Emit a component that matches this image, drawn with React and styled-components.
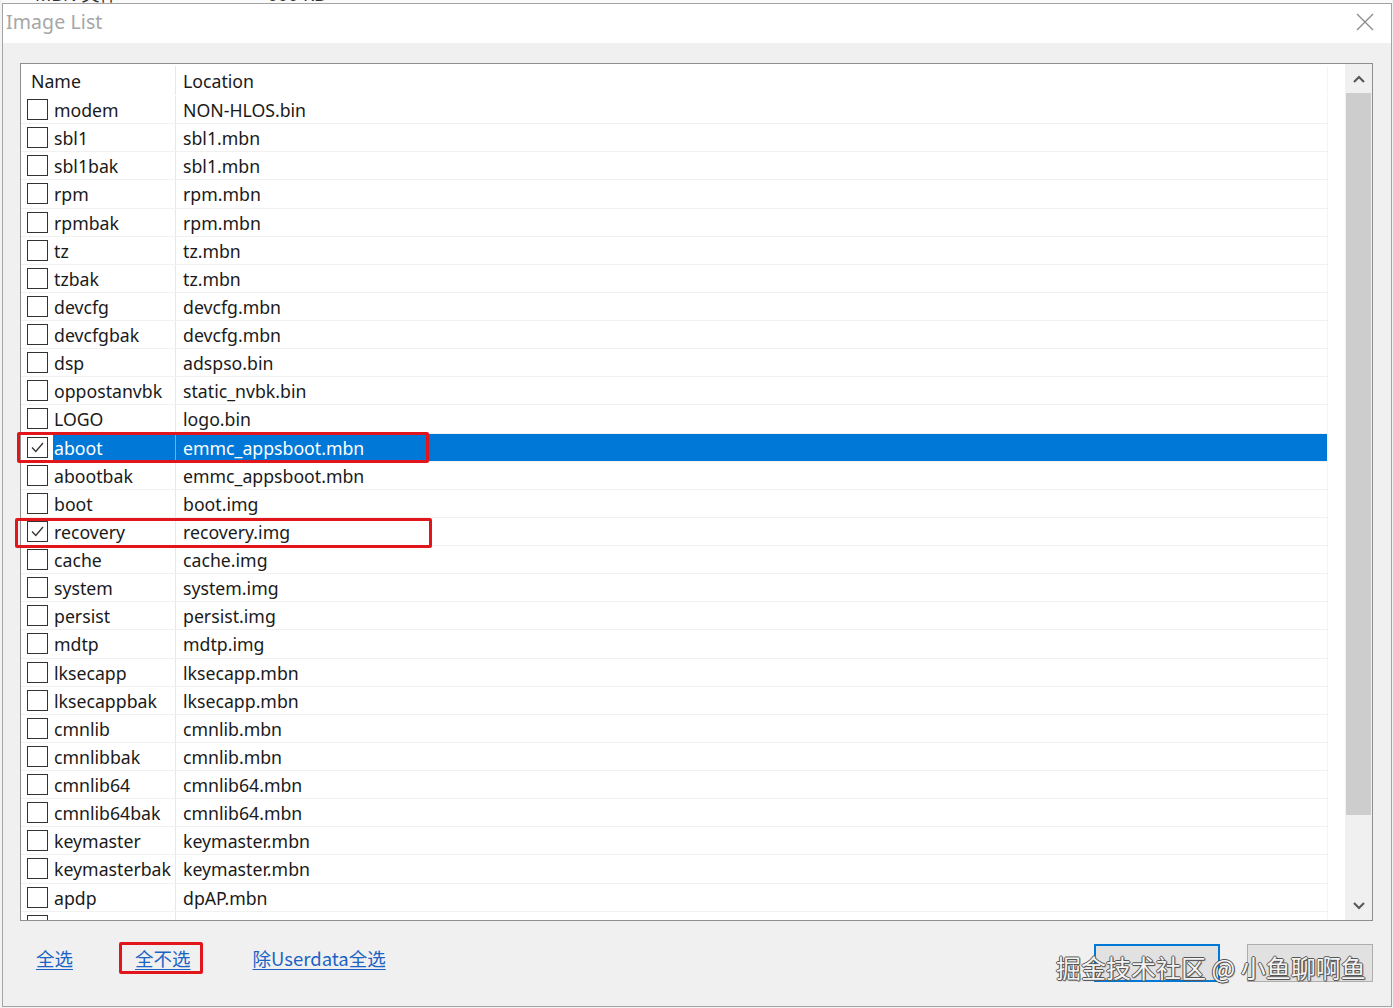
import React from "react";
import styled, { createGlobalStyle } from "styled-components";

const Global = createGlobalStyle`
  html, body { margin: 0; padding: 0; background: #f3f3f3; }
  body { font-family: "Noto Sans", "Noto Sans CJK SC", sans-serif; }
  * { box-sizing: border-box; }
`;

const Page = styled.div`
  width: 1393px;
  height: 1008px;
  padding: 0 1px 1px 2px;
  display: flex;
  flex-direction: column;
  overflow: hidden;
`;

const TopStrip = styled.div`
  height: 3px;
  overflow: hidden;
  display: flex;
  gap: 150px;
  padding-left: 33px;
  background: #fafafa;
`;

const StripText = styled.span`
  font-size: 18px;
  line-height: 18px;
  margin-top: -15px;
  color: #333;
  white-space: nowrap;
`;

const Dialog = styled.div`
  position: relative;
  flex: 1;
  border: 1px solid #a4a4a4;
  background: #f0f0f0;
  display: flex;
  flex-direction: column;
`;

const TitleBar = styled.div`
  height: 39px;
  background: #ffffff;
  display: flex;
  align-items: center;
  justify-content: space-between;
  padding: 0 17px 4px 3px;
`;

const Title = styled.span`
  font-size: 19.5px;
  color: #a6a6a6;
  letter-spacing: 0.1px;
`;

const Body = styled.div`
  position: relative;
  flex: 1;
  display: flex;
  flex-direction: column;
  padding: 20px 18px 0 17px;
`;

const ListBox = styled.div`
  height: 858px;
  border: 1px solid #8e8e8e;
  background: #ffffff;
  display: flex;
`;

const TableArea = styled.div`
  flex: 1;
  overflow: hidden;
  display: flex;
  flex-direction: column;
`;

const Row = styled.div`
  width: 1307px;
  flex: none;
  height: ${(p) => (p.$header ? "32px" : "28.14px")};
  display: flex;
  border-bottom: 1px solid ${(p) => (p.$header ? "transparent" : "#f1f1f1")};
  padding-top: ${(p) => (p.$header ? "2px" : "0")};
  font-size: 17.7px;
  color: #1a1a1a;
`;

const NameCell = styled.div`
  width: 155px;
  flex: none;
  display: flex;
  align-items: stretch;
  padding-left: ${(p) => (p.$header ? "9px" : "6px")};
  border-right: 1px solid #e8e8e8;
`;

const CheckSlot = styled.div`
  width: 26px;
  flex: none;
  display: flex;
  align-items: flex-start;
  padding-top: 3px;
`;

const Box = styled.span`
  width: 21px;
  height: 21px;
  border: 1px solid #333333;
  background: #ffffff;
  display: flex;
  align-items: center;
  justify-content: center;
`;

const Label = styled.span`
  flex: 1;
  display: flex;
  align-items: center;
  padding-left: 1px;
  padding-top: 1px;
  white-space: nowrap;
  background: ${(p) => (p.$sel ? "#0078d7" : "transparent")};
  color: ${(p) => (p.$sel ? "#ffffff" : "inherit")};
`;

const LocCell = styled.div`
  flex: 1;
  display: flex;
  align-items: center;
  padding-left: 7px;
  padding-top: 1px;
  white-space: nowrap;
  background: ${(p) => (p.$sel ? "#0078d7" : "transparent")};
  color: ${(p) => (p.$sel ? "#ffffff" : "inherit")};
  border-left: 1px solid ${(p) => (p.$sel ? "#6fb0e8" : "transparent")};
  margin-left: -1px;
  border-right: 1px solid #f4f4f4;
`;

const ScrollBar = styled.div`
  width: 27px;
  flex: none;
  background: #f0f0f0;
  display: flex;
  flex-direction: column;
  padding: 0 1px;
`;

const ArrowBtn = styled.div`
  height: 29px;
  flex: none;
  display: flex;
  align-items: center;
  justify-content: center;
`;

const Track = styled.div`
  flex: 1;
  display: flex;
  flex-direction: column;
`;

const Thumb = styled.div`
  height: 722px;
  background: #cdcdcd;
`;

const Bottom = styled.div`
  flex: 1;
  display: flex;
  align-items: flex-start;
  justify-content: space-between;
`;

const Links = styled.div`
  display: flex;
  gap: 62px;
  padding: 24px 0 0 16px;
`;

const LinkWrap = styled.span`
  position: relative;
`;

const Link = styled.a`
  font-family: "Noto Sans CJK SC", "Noto Sans", sans-serif;
  font-size: 18.5px;
  line-height: 26px;
  color: #1a62c4;
  text-decoration: underline;
  text-underline-offset: 3px;
  cursor: pointer;
`;

const Buttons = styled.div`
  display: flex;
  gap: 27px;
  padding-top: 23px;
`;

const Button = styled.div`
  width: 126px;
  height: 38px;
  background: #e1e1e1;
  border: ${(p) => (p.$primary ? "2px solid #0078d7" : "1px solid #adadad")};
`;

const RedBox = styled.div`
  position: absolute;
  border: 3px solid #e3151c;
  border-radius: 2px;
  pointer-events: none;
`;

const Watermark = styled.div`
  position: absolute;
  left: 1053px;
  top: 946px;
  font-family: "Noto Sans CJK SC", sans-serif;
  font-size: 25px;
  line-height: 34px;
  color: #f4f4f4;
  white-space: nowrap;
  text-shadow: 1px 0 0 #555, -1px 0 0 #555, 0 1px 0 #555, 0 -1px 0 #555,
    1px 1px 1px #666;
  pointer-events: none;
`;

const rows = [
  ["modem", "NON-HLOS.bin"],
  ["sbl1", "sbl1.mbn"],
  ["sbl1bak", "sbl1.mbn"],
  ["rpm", "rpm.mbn"],
  ["rpmbak", "rpm.mbn"],
  ["tz", "tz.mbn"],
  ["tzbak", "tz.mbn"],
  ["devcfg", "devcfg.mbn"],
  ["devcfgbak", "devcfg.mbn"],
  ["dsp", "adspso.bin"],
  ["oppostanvbk", "static_nvbk.bin"],
  ["LOGO", "logo.bin"],
  ["aboot", "emmc_appsboot.mbn", true, true],
  ["abootbak", "emmc_appsboot.mbn"],
  ["boot", "boot.img"],
  ["recovery", "recovery.img", true],
  ["cache", "cache.img"],
  ["system", "system.img"],
  ["persist", "persist.img"],
  ["mdtp", "mdtp.img"],
  ["lksecapp", "lksecapp.mbn"],
  ["lksecappbak", "lksecapp.mbn"],
  ["cmnlib", "cmnlib.mbn"],
  ["cmnlibbak", "cmnlib.mbn"],
  ["cmnlib64", "cmnlib64.mbn"],
  ["cmnlib64bak", "cmnlib64.mbn"],
  ["keymaster", "keymaster.mbn"],
  ["keymasterbak", "keymaster.mbn"],
  ["apdp", "dpAP.mbn"],
  ["", ""],
];

const Check = () => (
  <svg width="15" height="15" viewBox="0 0 15 15">
    <path d="M2 7.5 L5.8 11.5 L13 3" fill="none" stroke="#333" strokeWidth="1.3" />
  </svg>
);

const Chevron = ({ up }) => (
  <svg width="14" height="10" viewBox="0 0 14 10">
    <path
      d={up ? "M2 8 L7 3 L12 8" : "M2 2 L7 7 L12 2"}
      fill="none"
      stroke="#5a5a5a"
      strokeWidth="2.2"
    />
  </svg>
);

const CloseIcon = () => (
  <svg width="18" height="18" viewBox="0 0 18 18">
    <path d="M1 1 L17 17 M17 1 L1 17" stroke="#8a8a8a" strokeWidth="1.3" />
  </svg>
);

export default function App() {
  return (
    <>
      <Global />
      <Page>
        <TopStrip>
          <StripText>MBN 文件</StripText>
          <StripText>000 KB</StripText>
        </TopStrip>
        <Dialog>
          <TitleBar>
            <Title>Image List</Title>
            <CloseIcon />
          </TitleBar>
          <Body>
            <ListBox>
              <TableArea>
                <Row $header>
                  <NameCell $header>
                    <Label>Name</Label>
                  </NameCell>
                  <LocCell>Location</LocCell>
                </Row>
                {rows.map(([name, loc, checked, sel], i) => (
                  <Row key={i}>
                    <NameCell>
                      <CheckSlot>
                        <Box>{checked && <Check />}</Box>
                      </CheckSlot>
                      <Label $sel={sel}>{name}</Label>
                    </NameCell>
                    <LocCell $sel={sel}>{loc}</LocCell>
                  </Row>
                ))}
              </TableArea>
              <ScrollBar>
                <ArrowBtn>
                  <Chevron up />
                </ArrowBtn>
                <Track>
                  <Thumb />
                </Track>
                <ArrowBtn>
                  <Chevron />
                </ArrowBtn>
              </ScrollBar>
            </ListBox>
            <Bottom>
              <Links>
                <Link>全选</Link>
                <LinkWrap>
                  <Link>全不选</Link>
                  <RedBox style={{ left: -16, top: -3, width: 84, height: 32 }} />
                </LinkWrap>
                <Link>除Userdata全选</Link>
              </Links>
              <Buttons>
                <Button $primary />
                <Button />
              </Buttons>
            </Bottom>
            <RedBox style={{ left: 14, top: 389, width: 412, height: 31 }} />
            <RedBox style={{ left: 12, top: 475, width: 417, height: 30 }} />
          </Body>
          <Watermark>掘金技术社区 @ 小鱼聊啊鱼</Watermark>
        </Dialog>
      </Page>
    </>
  );
}
